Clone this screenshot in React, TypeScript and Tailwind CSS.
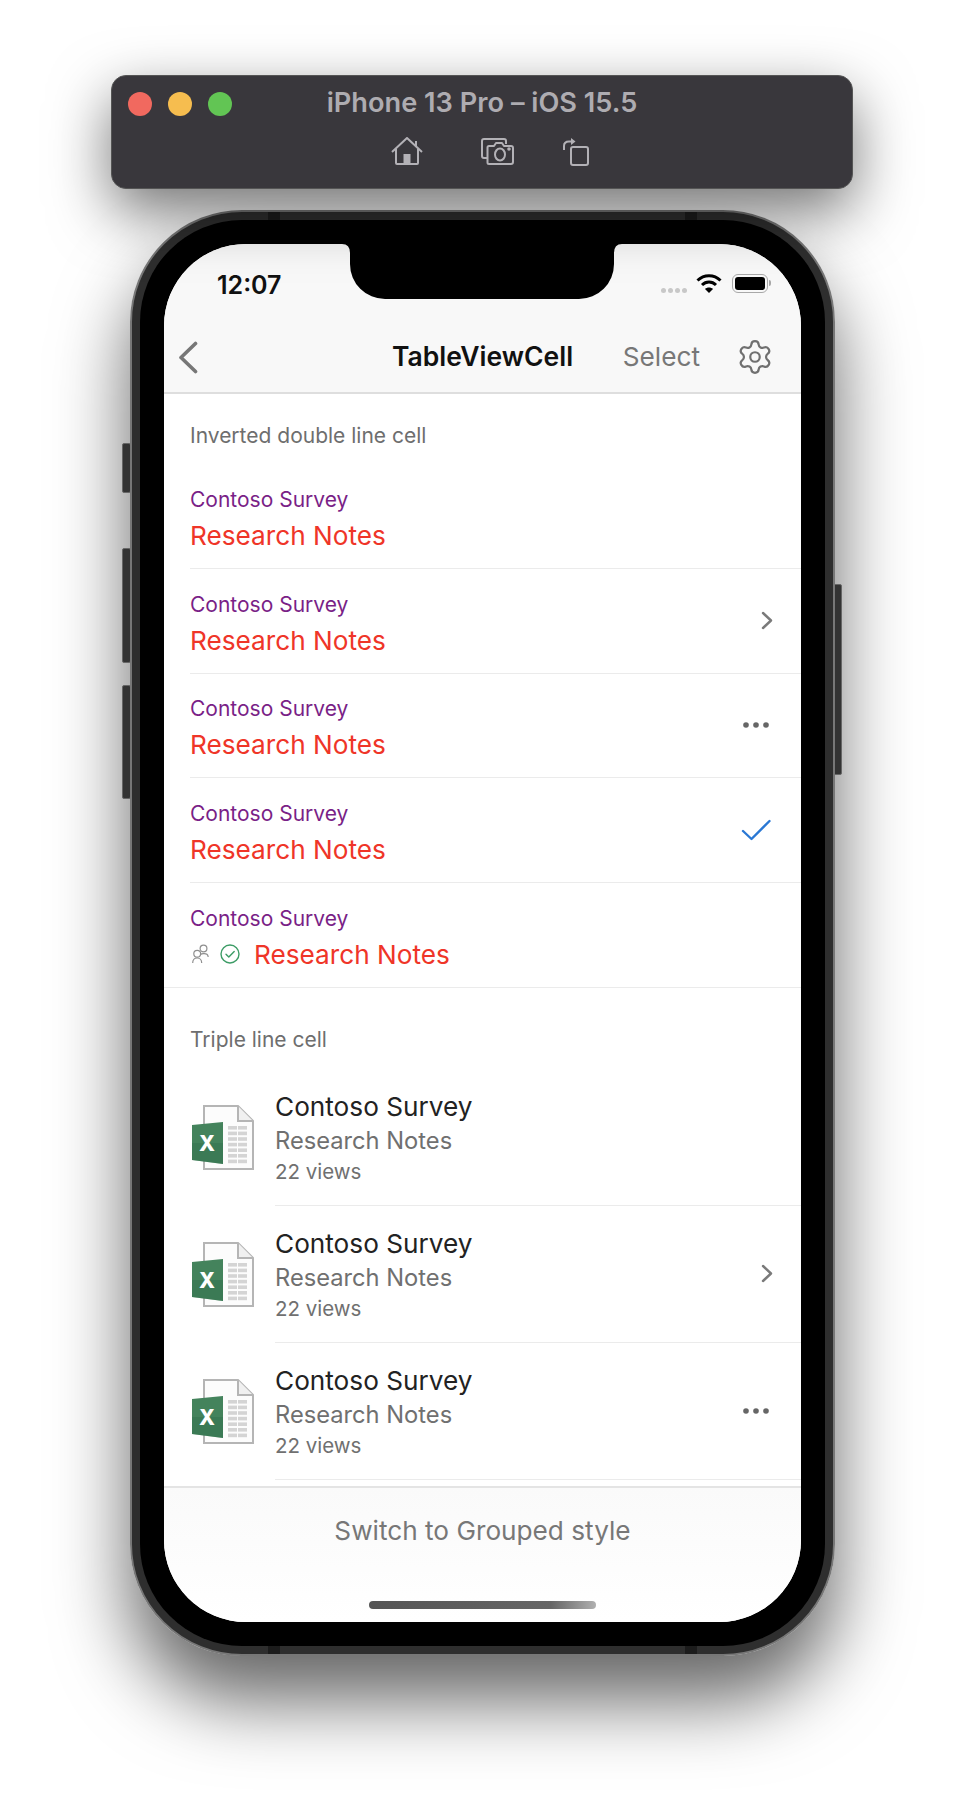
import { Settings } from "lucide-react";

const font = "font-['Inter','Liberation_Sans',sans-serif]";

function Chevron() {
  return (
    <svg width="12" height="19" viewBox="0 0 12 19" fill="none" stroke="#7a7a7a" strokeWidth="2.4" strokeLinecap="round" strokeLinejoin="round" className="ml-[23px]">
      <path d="M2 2l8 7.5L2 17" />
    </svg>
  );
}

function More() {
  return (
    <svg width="26" height="6" viewBox="0 0 26 6" fill="#666">
      <circle cx="3" cy="3" r="2.8" />
      <circle cx="13" cy="3" r="2.8" />
      <circle cx="23" cy="3" r="2.8" />
    </svg>
  );
}

function Check() {
  return (
    <svg width="30" height="22" viewBox="0 0 30 22" fill="none" stroke="#2a78d4" strokeWidth="2.4" strokeLinecap="round" strokeLinejoin="round">
      <path d="M2 12l8.5 8L28.5 2" />
    </svg>
  );
}

function People() {
  return (
    <svg width="17" height="20" viewBox="0 0 17 20" fill="none" stroke="#8f8f8f" strokeWidth="1.2">
      <circle cx="11.5" cy="4.5" r="3.4" />
      <path d="M8.5 10.5c1-1 5-1.4 6.4-.2.8.7 1.2 1.6 1.3 2.7" />
      <circle cx="5.2" cy="9.8" r="3.4" />
      <path d="M.7 19c0-3 1.8-5 4.5-5s4.5 2 4.5 5" />
    </svg>
  );
}

function DoneCircle() {
  return (
    <svg width="20" height="20" viewBox="0 0 20 20" fill="none" stroke="#3d9c66" strokeWidth="1.4" strokeLinecap="round" strokeLinejoin="round">
      <circle cx="10" cy="10" r="9" />
      <path d="M6 10.3l2.8 2.8L14.2 7.4" />
    </svg>
  );
}

function ExcelIcon() {
  const rows = [0, 1, 2, 3, 4, 5, 6];
  return (
    <svg width="62" height="65" viewBox="0 0 62 65" className="shrink-0">
      <path d="M12 1h34l15 15v48H12z" fill="#fcfcfc" stroke="#b5b5b5" strokeWidth="2" />
      <path d="M46 1v15h15" fill="#f0f0f0" stroke="#b5b5b5" strokeWidth="2" />
      {rows.map(r => (
        <g key={r} fill="#d4d4d4">
          <rect x="36" y={21 + r * 5.6} width="9" height="3.6" />
          <rect x="46" y={21 + r * 5.6} width="9" height="3.6" />
        </g>
      ))}
      <path d="M0 20l31-3v42L0 55z" fill="#44835c" />
      <path d="M0 38h31v21L0 55z" fill="#2f6f4a" opacity="0.4" />
      <text x="15" y="46" textAnchor="middle" fontSize="21" fontWeight="800" fill="#fff" fontFamily="Inter, sans-serif">
        X
      </text>
    </svg>
  );
}

function DoubleRow({ accessory, withIcons, last }: { accessory?: React.ReactNode; withIcons?: boolean; last?: boolean }) {
  return (
    <div className={last ? "border-b border-[#ebebeb] pl-[26px]" : "pl-[26px]"}>
      <div className={last ? "flex h-[104px] items-center" : "flex h-[104.5px] items-center border-b border-[#ebebeb]"}>
        <div className="flex-1">
          <div className="text-[21px] leading-[39px] text-[#7a1f87]">Contoso Survey</div>
          <div className="flex h-[33px] items-center text-[26.2px] leading-[33px] text-[#ef3528]">
            {withIcons && (
              <span className="mr-[14px] flex items-center gap-[11px]">
                <span className="ml-[2px]"><People /></span>
                <DoneCircle />
              </span>
            )}
            Research Notes
          </div>
        </div>
        <div className="flex w-[91px] justify-center">{accessory}</div>
      </div>
    </div>
  );
}

function TripleRow({ accessory }: { accessory?: React.ReactNode }) {
  return (
    <div className="flex h-[137px] items-center pl-[28px]">
      <ExcelIcon />
      <div className="ml-[21px] flex h-full flex-1 items-center border-b border-[#ebebeb]">
        <div className="flex-1 pt-[3px]">
          <div className="text-[26.2px] leading-[34px] text-[#222]">Contoso Survey</div>
          <div className="text-[23.7px] leading-[34px] text-[#707070]">Research Notes</div>
          <div className="text-[20.5px] leading-[28px] text-[#707070]">22 views</div>
        </div>
        <div className="flex w-[91px] justify-center">{accessory}</div>
      </div>
    </div>
  );
}

function SideButton({ className }: { className: string }) {
  return <div className={`absolute w-[9px] rounded-[2px] border border-[#666] bg-[#333] ${className}`} />;
}

export default function App() {
  return (
    <div className={`h-[1806px] w-[964px] overflow-hidden bg-white pt-[75px] ${font}`}>
      {/* simulator title bar */}
      <div className="relative z-10 ml-[111px] h-[114px] w-[742px] rounded-[15px] border border-[#555] bg-[#39373c] shadow-[0_22px_60px_rgba(0,0,0,0.55)]">
        <div className="grid h-[55px] grid-cols-[1fr_auto_1fr] items-center pl-[16px]">
          <div className="flex gap-[16px]">
            <div className="h-[24px] w-[24px] rounded-full bg-[#f1695f]" />
            <div className="h-[24px] w-[24px] rounded-full bg-[#f6bd4f]" />
            <div className="h-[24px] w-[24px] rounded-full bg-[#62c554]" />
          </div>
          <div className="mr-[16px] text-[27.2px] font-semibold text-[#aeacb1]">iPhone 13 Pro – iOS 15.5</div>
          <div />
        </div>
        <div className="flex h-[40px] items-center justify-center gap-[49px] pl-[16px]">
          <div className="flex items-center gap-[58px]">
            <svg width="32" height="28" viewBox="0 0 32 28" fill="none" stroke="#b3b1b6" strokeWidth="2" strokeLinejoin="round">
              <path d="M1 15L16 1l15 14" />
              <path d="M5 12v14a1 1 0 0 0 1 1h20a1 1 0 0 0 1-1V12" />
              <path d="M25 4v6" />
              <rect x="12.5" y="17" width="7" height="10" fill="#b3b1b6" stroke="none" />
            </svg>
            <svg width="33" height="27" viewBox="0 0 33 27" fill="none" stroke="#b3b1b6" strokeWidth="2" strokeLinejoin="round">
              <path d="M6 20H3a2 2 0 0 1-2-2V3a2 2 0 0 1 2-2h20a2 2 0 0 1 2 2v3" />
              <path d="M8 26a1.500 1.500 0 0 1-1.500-1.500V9.500A1.500 1.500 0 0 1 8 8h5l2-3h6l2 3h7a2 2 0 0 1 2 2v14a2 2 0 0 1-2 2z" />
              <ellipse cx="19" cy="16.500" rx="5" ry="6" />
              <circle cx="28" cy="11" r="0.8" fill="#b3b1b6" />
            </svg>
          </div>
          <svg width="26" height="29" viewBox="0 0 26 29" fill="none" stroke="#b3b1b6" strokeWidth="2" strokeLinejoin="round">
            <rect x="8" y="10" width="17" height="18" rx="2" />
            <path d="M1 13V9c0-3 2-4.500 5-4.500h4" />
            <path d="M8 1l4.500 3.500L8 8" fill="#b3b1b6" stroke="none" />
          </svg>
        </div>
      </div>

      {/* phone */}
      <div className="relative ml-[130px] mt-[21px] h-[1446px] w-[705px]">
        <div className="absolute inset-0 rounded-[112px] shadow-[0_45px_75px_rgba(0,0,0,0.6)]" />
        <SideButton className="left-[-8px] top-[233px] h-[50px]" />
        <SideButton className="left-[-8px] top-[338px] h-[115px]" />
        <SideButton className="left-[-8px] top-[475px] h-[114px]" />
        <SideButton className="right-[-7px] top-[374px] h-[191px]" />

        <div className="relative h-full rounded-[112px] border-2 border-[#777] bg-[#2e2e2e] p-[8px]">
          <div className="absolute left-[136px] top-0 h-[8px] w-[12px] bg-[#1c1c1c]" />
          <div className="absolute right-[136px] top-0 h-[8px] w-[12px] bg-[#1c1c1c]" />
          <div className="absolute bottom-0 left-[136px] h-[8px] w-[12px] bg-[#1c1c1c]" />
          <div className="absolute bottom-0 right-[136px] h-[8px] w-[12px] bg-[#1c1c1c]" />
          <div className="h-full rounded-[102px] bg-black p-[24px]">
            {/* screen */}
            <div className="relative flex h-[1378px] w-[637px] flex-col overflow-hidden rounded-[82px] bg-white">
              <svg width="280" height="55" viewBox="0 0 280 55" className="absolute left-[178px] top-0 z-10">
                <path d="M0 0H280Q272 0 272 9V20A35 35 0 0 1 237 55H43A35 35 0 0 1 8 20V9Q8 0 0 0Z" fill="#000" />
              </svg>

              <div className="shrink-0 border-b-2 border-[#dedede] bg-[#f8f8f8]">
                <div className="flex h-[78px] items-center justify-between pl-[53px] pr-[30px]">
                  <span className="mt-[6px] text-[25px] font-semibold text-[#111]">12:07</span>
                  <div className="flex items-center">
                    <div className="mr-[9px] mt-[14px] flex gap-[2px]">
                      <div className="h-[5px] w-[5px] rounded-full bg-[#c8c8c8]" />
                      <div className="h-[5px] w-[5px] rounded-full bg-[#c8c8c8]" />
                      <div className="h-[5px] w-[5px] rounded-full bg-[#c8c8c8]" />
                      <div className="h-[5px] w-[5px] rounded-full bg-[#c8c8c8]" />
                    </div>
                    <svg width="26" height="20" viewBox="0 0 26 20" fill="none" stroke="#000" strokeWidth="3">
                      <path d="M1.500 7.500C8 1 18 1 24.500 7.500" />
                      <path d="M6 12c4-4 10-4 14 0" />
                      <path d="M13 20l-4-4c2-2 6-2 8 0z" fill="#000" stroke="none" />
                    </svg>
                    <div className="ml-[10px] flex items-center">
                      <div className="h-[19px] w-[36px] rounded-[6px] border-[1.5px] border-[#a8a8a8] p-[2px]">
                        <div className="h-full w-full rounded-[3px] bg-black" />
                      </div>
                      <div className="ml-[1px] h-[6px] w-[2px] rounded-r-full bg-[#a8a8a8]" />
                    </div>
                  </div>
                </div>
                <div className="grid h-[70px] grid-cols-[1fr_auto_1fr] items-center">
                  <svg width="20" height="33" viewBox="0 0 20 33" fill="none" stroke="#777" strokeWidth="3.6" strokeLinecap="round" strokeLinejoin="round" className="ml-[14px]">
                    <path d="M17.500 2.500L3 16.500l14.500 14" />
                  </svg>
                  <div className="text-[26.5px] font-semibold text-[#111]">TableViewCell</div>
                  <div className="flex items-center justify-end gap-[36px] pr-[27px]">
                    <span className="text-[26.2px] text-[#777]">Select</span>
                    <Settings size={38} color="#707070" strokeWidth={1.4} />
                  </div>
                </div>
              </div>

              <div className="flex-1 overflow-hidden">
                <div className="h-[70.5px] pl-[26px] pt-[28px] text-[21px] leading-[28px] text-[#6e6e6e]">Inverted double line cell</div>
                <DoubleRow />
                <DoubleRow accessory={<Chevron />} />
                <DoubleRow accessory={<More />} />
                <DoubleRow accessory={<Check />} />
                <DoubleRow withIcons last />

                <div className="h-[81px] pl-[26px] pt-[38px] text-[21px] leading-[28px] text-[#6e6e6e]">Triple line cell</div>
                <TripleRow />
                <TripleRow accessory={<Chevron />} />
                <TripleRow accessory={<More />} />
              </div>

              <div className="h-[136px] shrink-0 border-t-2 border-[#e4e4e4] bg-gradient-to-b from-[#fafafa] to-white">
                <div className="pt-[26px] text-center text-[26.2px] leading-[34px] text-[#777]">Switch to Grouped style</div>
                <div className="mx-auto mt-[53px] h-[8px] w-[227px] rounded-full bg-gradient-to-r from-[#555] via-[#666] via-80% to-[#b0b0b0]" />
              </div>
            </div>
          </div>
        </div>
      </div>
    </div>
  );
}
